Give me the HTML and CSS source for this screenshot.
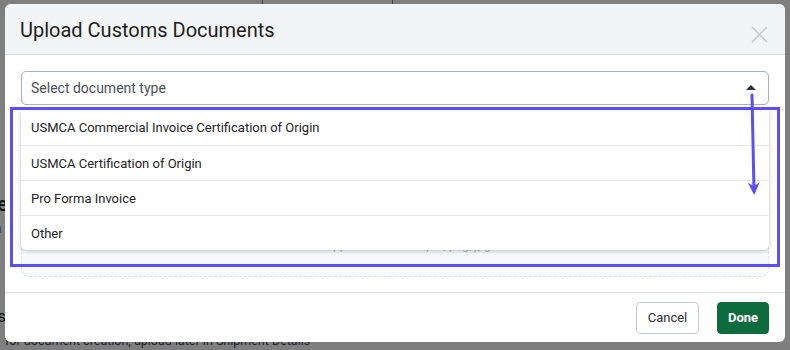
FILE: index.html
```html
<!DOCTYPE html>
<html lang="en">
<head>
    <meta charset="UTF-8">
    <meta name="viewport" content="width=device-width, initial-scale=1.0">
    <title>Upload Customs Documents</title>
    <link rel="stylesheet" href="styles.css">
</head>
<body>
    <div class="page">
        <p class="page-heading">Upload Guide</p>
        <p class="page-sub">Extra</p>
        <p class="page-label">Uploads</p>
        <p class="page-note">for document creation, upload later in Shipment Details</p>
    </div>

    <div class="backdrop"></div>

    <div class="modal">
        <div class="modal-header">
            <h2 class="modal-title">Upload Customs Documents</h2>
            <button class="close-btn" aria-label="Close">
                <svg width="17" height="17" viewBox="0 0 17 17">
                    <path d="M1 1 L16 16 M16 1 L1 16" stroke="#c3c7cb" stroke-width="1.5" fill="none"/>
                </svg>
            </button>
        </div>

        <div class="modal-body">
            <div class="select-box">
                <span class="select-placeholder">Select document type</span>
                <span class="caret"></span>
            </div>

            <div class="drop-zone">
                <p class="drop-hint">Supported formats: pdf, png, jpg</p>
            </div>

            <ul class="dropdown">
                <li class="dropdown-item">USMCA Commercial Invoice Certification of Origin</li>
                <li class="dropdown-item">USMCA Certification of Origin</li>
                <li class="dropdown-item">Pro Forma Invoice</li>
                <li class="dropdown-item">Other</li>
            </ul>
        </div>

        <div class="modal-footer">
            <button class="btn btn-cancel">Cancel</button>
            <button class="btn btn-done">Done</button>
        </div>
    </div>

    <!-- annotation -->
    <div class="highlight-box"></div>
    <svg class="arrow" width="20" height="110" viewBox="0 0 20 110">
        <path d="M8 2 L10 98" stroke="#5a4ff6" stroke-width="3" stroke-linecap="round" fill="none"/>
        <path d="M4 90 L10.2 102 L15.5 89.5 L10 93 Z" fill="#5a4ff6"/>
    </svg>
</body>
</html>
```

FILE: styles.css
```css
:root {
    --texto: #212529;
    --borda: #dee2e6;
    --cinza-claro: #f3f4f6;
    --verde: #0e6b3e;
    --roxo: #5a4ff6;
}

* {
    box-sizing: border-box;
}

body {
    font-family: Roboto, 'Liberation Sans', Arial, sans-serif;
    margin: 0;
    width: 790px;
    height: 350px;
    overflow: hidden;
    position: relative;
    background: #ffffff;
    color: var(--texto);
}

.page {
    padding: 192px 0 0 0;
    height: 350px;
}

.page p {
    margin: 0;
}

.page-heading {
    font-size: 20px;
    font-weight: 500;
    margin-left: -112px !important;
}

.page-sub {
    font-size: 14px;
    color: #6b7280;
    margin: 4px 0 0 -30px !important;
}

.page-label {
    font-size: 17px;
    margin: 70px 0 0 -56px !important;
}

.page-note {
    font-size: 12.5px;
    color: #374151;
    margin: 7px 0 0 5px !important;
}

.backdrop {
    position: absolute;
    inset: 0;
    background: rgba(0, 0, 0, 0.5);
}

.backdrop::before {
    content: '';
    position: absolute;
    left: 262px;
    top: 0;
    width: 129px;
    height: 4px;
    border-left: 1px solid #444;
    border-right: 1px solid #444;
}

.modal {
    position: absolute;
    left: 5px;
    top: 4px;
    width: 780px;
    height: 338px;
    background: #ffffff;
    border-radius: 6px;
    display: flex;
    flex-direction: column;
    overflow: hidden;
}

.modal-header {
    height: 51px;
    background: var(--cinza-claro);
    border-bottom: 1px solid #d9dcdf;
    display: flex;
    align-items: center;
    justify-content: space-between;
    padding: 0 17px 0 15px;
}

.modal-title {
    margin: 0;
    font-size: 20px;
    font-weight: 400;
    color: #1b1e21;
    padding-top: 2px;
}

.close-btn {
    background: none;
    border: none;
    padding: 0;
    margin-top: 11px;
    display: flex;
}

.modal-body {
    position: relative;
    padding: 16px 16px 0 16px;
    flex: 1;
}

.select-box {
    height: 34px;
    border: 1px solid #a9b0b8;
    border-radius: 5px;
    display: flex;
    align-items: center;
    justify-content: space-between;
    padding: 0 12px 0 9px;
}

.select-placeholder {
    font-size: 14px;
    color: #4b5158;
}

.caret {
    width: 0;
    height: 0;
    border-left: 5px solid transparent;
    border-right: 5px solid transparent;
    border-bottom: 5px solid #2f3337;
    margin-top: -2px;
}

.drop-zone {
    margin-top: 8px;
    height: 164px;
    border: 1px dashed #dfe2e6;
    border-radius: 8px;
    background: #f8f9fb;
    display: flex;
    align-items: flex-end;
    justify-content: center;
    padding-bottom: 24px;
}

.drop-hint {
    margin: 0;
    font-size: 12px;
    color: #b3b8bd;
    margin-left: 20px;
}

.dropdown {
    position: absolute;
    left: 16px;
    top: 55px;
    width: 748px;
    margin: 0;
    padding: 0;
    list-style: none;
    background: #ffffff;
    border-radius: 0 0 5px 5px;
    box-shadow: 0 1px 4px rgba(0, 0, 0, 0.25);
}

.dropdown-item {
    height: 35px;
    display: flex;
    align-items: center;
    padding-left: 10px;
    font-size: 13px;
    color: #1f2326;
    border-top: 1px solid #e6e8eb;
}

.dropdown-item:first-child {
    border-top: none;
}

.modal-footer {
    height: 50px;
    border-top: 1px solid #e3e6e9;
    display: flex;
    align-items: center;
    justify-content: flex-end;
    gap: 18px;
    padding: 0 16px 0 0;
}

.btn {
    height: 32px;
    border-radius: 4px;
    font-family: inherit;
    font-size: 13px;
    cursor: pointer;
}

.btn-cancel {
    width: 63px;
    background: #ffffff;
    border: 1px solid #c6cbd0;
    color: #2a2e33;
}

.btn-done {
    width: 52px;
    background: var(--verde);
    border: 1px solid var(--verde);
    color: #ffffff;
    font-weight: 700;
}

.highlight-box {
    position: absolute;
    left: 10px;
    top: 107px;
    width: 770px;
    height: 160px;
    border: 3.5px solid var(--roxo);
}

.arrow {
    position: absolute;
    left: 744px;
    top: 93px;
}
```
